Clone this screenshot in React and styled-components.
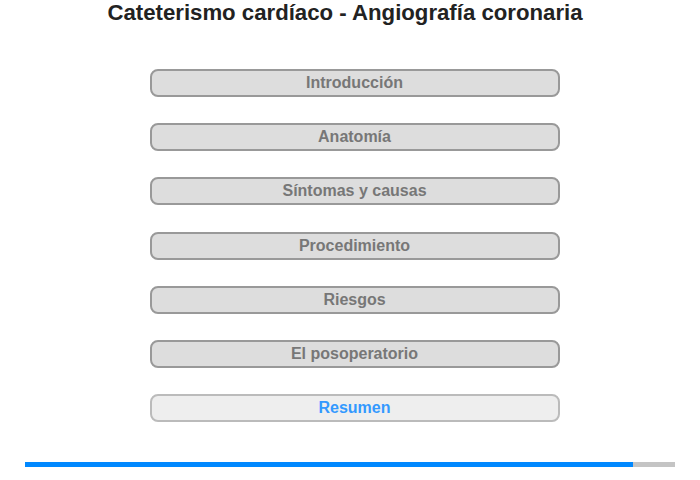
import React from 'react';
import styled, { createGlobalStyle } from 'styled-components';

const GlobalStyle = createGlobalStyle`
    body {
        margin: 0;
        background: #fff;
        font-family: "Liberation Sans", Arial, sans-serif;
    }
`;

const sections = [
    'Introducción',
    'Anatomía',
    'Síntomas y causas',
    'Procedimiento',
    'Riesgos',
    'El posoperatorio',
];

const App = () => {
    return (
        <Page>
            <GlobalStyle />
            <Title>Cateterismo cardíaco - Angiografía coronaria</Title>
            <Menu>
                {sections.map((s) => <MenuButton key={s}>{s}</MenuButton>)}
                <MenuButton $active>Resumen</MenuButton>
            </Menu>
            <Progress>
                <ProgressFill style={{ width: '93.5%' }} />
            </Progress>
        </Page>
    );
};

export default App;

const Page = styled.div`
    width: 700px;
    height: 480px;
    display: flex;
    flex-direction: column;
    align-items: center;
`;

const Title = styled.h1`
    margin: 0 0 0 -10px;
    font-size: 22.2px;
    line-height: 26px;
    font-weight: bold;
    color: #222;
`;

const Menu = styled.div`
    margin-top: 43px;
    margin-left: 9px;
    display: flex;
    flex-direction: column;
    gap: 26.2px;
`;

const MenuButton = styled.div`
    box-sizing: border-box;
    width: 410px;
    height: 28px;
    display: flex;
    align-items: center;
    justify-content: center;
    border: 2px solid ${(p) => (p.$active ? '#bbb' : '#999')};
    border-radius: 8px;
    background: ${(p) => (p.$active ? '#eee' : '#ddd')};
    color: ${(p) => (p.$active ? '#3399ff' : '#777')};
    font-size: 16px;
    font-weight: bold;
    cursor: pointer;
`;

const Progress = styled.div`
    margin-top: 40px;
    width: 650px;
    height: 5px;
    background: #c4c4c4;
`;

const ProgressFill = styled.div`
    height: 100%;
    background: #0088ff;
`;
